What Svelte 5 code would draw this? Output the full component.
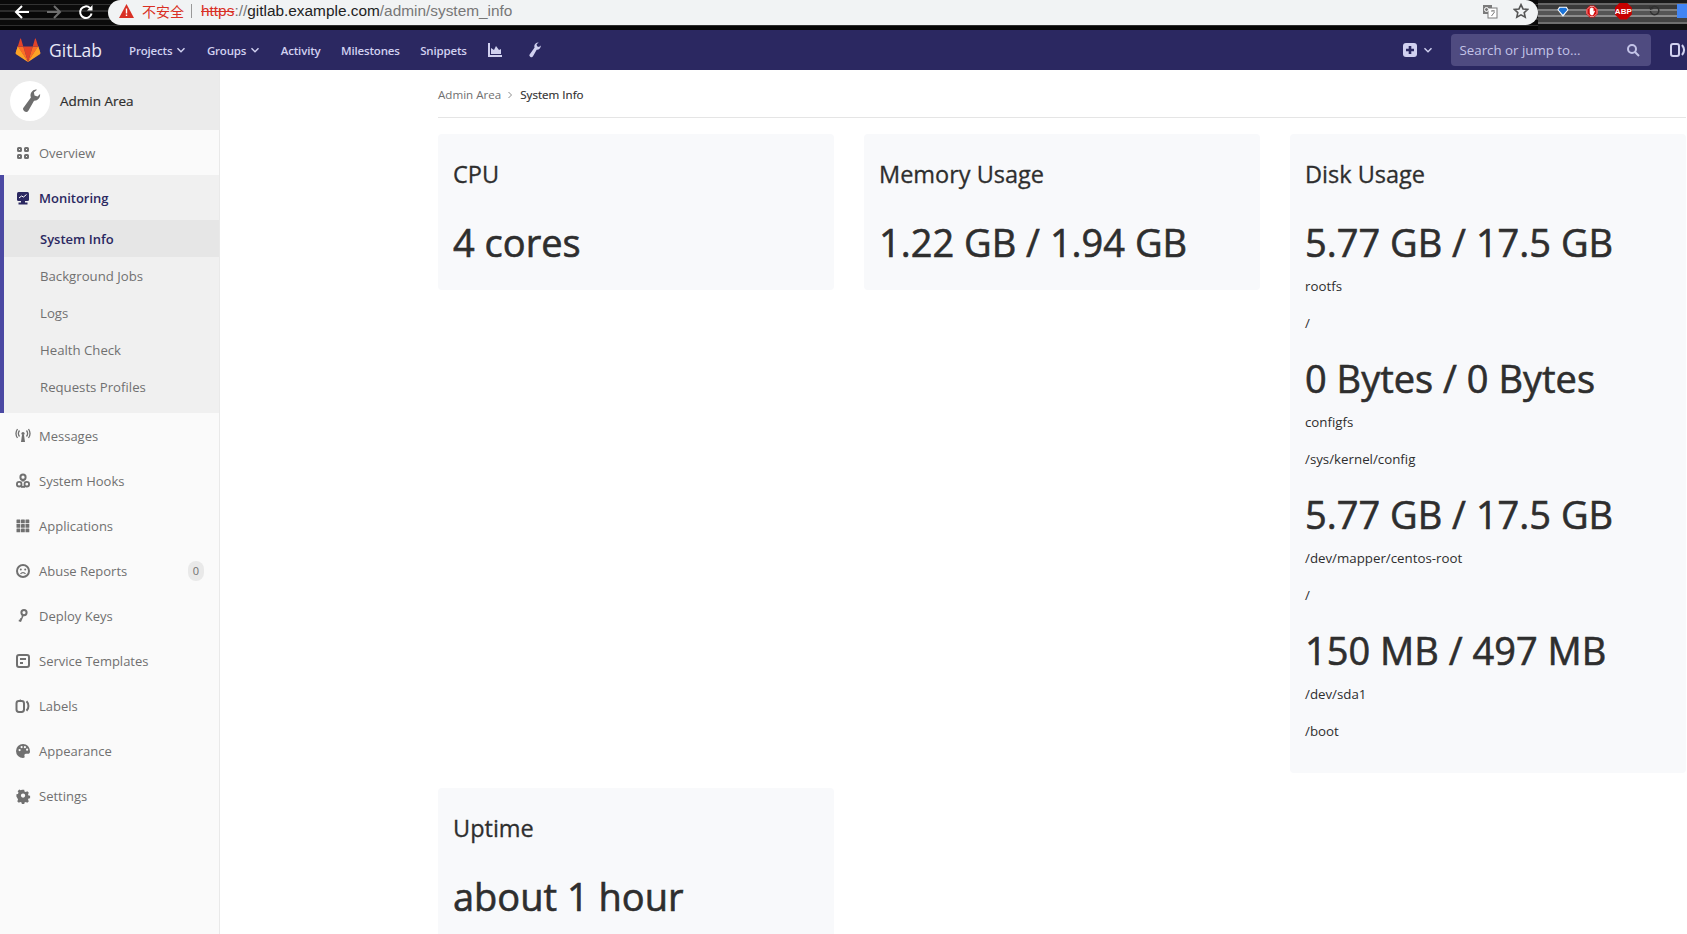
<script>
  const sub = ['System Info', 'Background Jobs', 'Logs', 'Health Check', 'Requests Profiles'];
  const disks = [
    { usage: '5.77 GB / 17.5 GB', name: 'rootfs', mount: '/' },
    { usage: '0 Bytes / 0 Bytes', name: 'configfs', mount: '/sys/kernel/config' },
    { usage: '5.77 GB / 17.5 GB', name: '/dev/mapper/centos-root', mount: '/' },
    { usage: '150 MB / 497 MB', name: '/dev/sda1', mount: '/boot' }
  ];
  const lower = [
    { label: 'Messages', icon: 'messages' },
    { label: 'System Hooks', icon: 'hook' },
    { label: 'Applications', icon: 'apps' },
    { label: 'Abuse Reports', icon: 'abuse', badge: '0' },
    { label: 'Deploy Keys', icon: 'key' },
    { label: 'Service Templates', icon: 'template' },
    { label: 'Labels', icon: 'labels' },
    { label: 'Appearance', icon: 'palette' },
    { label: 'Settings', icon: 'gear' }
  ];
</script>

{#snippet wrench(size, color)}
  <svg width={size} height={size} viewBox="0 0 16 16" fill={color}>
    <path d="M11.900.4a3.800 3.800 0 0 0-3.300 5.200L4 12a1.900 1.900 0 1 0 3 2.300l3.700-6.500a3.800 3.800 0 0 0 4-4.400L13 5l-2-.7-.4-2.100L12.700.5a3.800 3.800 0 0 0-.8-.1z"/>
  </svg>
{/snippet}

{#snippet navIcon(name)}
  <svg class="nav-icon" width="16" height="16" viewBox="0 0 16 16" fill="#707070">
    {#if name === 'messages'}
      <circle cx="8" cy="5.500" r="1.600"/>
      <path d="M7 7h2l1 7H6z"/>
      <path d="M4.500 2.500a5 5 0 0 0 0 6M11.500 2.500a5 5 0 0 1 0 6M2.500 1a8 8 0 0 0 0 9M13.500 1a8 8 0 0 1 0 9" fill="none" stroke="#707070" stroke-width="1.300"/>
    {:else if name === 'hook'}
      <circle cx="8" cy="4.200" r="2.600" fill="none" stroke="#707070" stroke-width="2"/>
      <path d="M6.500 6.500h3v2h-3z"/>
      <circle cx="4.200" cy="11.200" r="2.300" fill="none" stroke="#707070" stroke-width="1.800"/>
      <circle cx="11.800" cy="11.200" r="2.300" fill="none" stroke="#707070" stroke-width="1.800"/>
      <path d="M6 12.800h4v2H6z"/>
    {:else if name === 'apps'}
      {#each [1.500, 6, 10.500] as y}
        {#each [1.500, 6, 10.500] as x}
          <rect {x} {y} width="3.800" height="3.800" rx=".4"/>
        {/each}
      {/each}
    {:else if name === 'abuse'}
      <circle cx="8" cy="8" r="6" fill="none" stroke="#707070" stroke-width="2"/>
      <circle cx="5.800" cy="6.600" r="1"/>
      <circle cx="10.200" cy="6.600" r="1"/>
      <path d="M5.500 11a3 3 0 0 1 5 0" fill="none" stroke="#707070" stroke-width="1.200"/>
    {:else if name === 'key'}
      <circle cx="9" cy="4.600" r="2.600" fill="none" stroke="#707070" stroke-width="2"/>
      <path d="M7 6.600l1.800 1-2.800 6.400-2.400-.8.3-1.400 1.200-.3.2-1.400 1-.2z"/>
    {:else if name === 'template'}
      <rect x="2" y="2" width="12" height="12" rx="2" fill="none" stroke="#707070" stroke-width="2"/>
      <rect x="5" y="5" width="6" height="2"/>
      <rect x="5" y="9" width="3" height="2"/>
    {:else if name === 'labels'}
      <rect x="1.500" y="3" width="7.500" height="11" rx="2.400" fill="none" stroke="#707070" stroke-width="2"/>
      <path d="M3.500 2.800l1.700-1.500 1.700 1.500z"/>
      <path d="M11.500 3.200c2.600 2.600 2.600 7 0 9.600" fill="none" stroke="#707070" stroke-width="2"/>
    {:else if name === 'palette'}
      <path fill-rule="evenodd" d="M8 1a7 7 0 1 0 0 14c1.600 0 1.900-1 1.500-2-.5-1.200.2-2.200 1.500-2.200h2c1.200 0 2-.8 2-2.300C15 4 12 1 8 1zM4.600 8.200a1.100 1.100 0 1 1 0-2.200 1.100 1.100 0 0 1 0 2.200zm2-3a1.100 1.100 0 1 1 0-2.200 1.100 1.100 0 0 1 0 2.200zm3.300.1a1.100 1.100 0 1 1 0-2.200 1.100 1.100 0 0 1 0 2.200zm2.200 2.500a1.100 1.100 0 1 1 0-2.200 1.100 1.100 0 0 1 0 2.200z"/>
    {:else if name === 'gear'}
      <path fill-rule="evenodd" d="M6.600 1h2.800l.4 2 1.500.7 1.800-1 1.900 2-1 1.700.6 1.600 1.900.4v2.800l-1.900.4-.6 1.600 1 1.700-1.900 1.900-1.800-1-1.500.7-.4 1.900H6.600l-.4-1.900-1.500-.7-1.800 1-1.900-1.900 1-1.700-.6-1.600L0 9.200V6.400l1.900-.4.6-1.600-1-1.700 1.900-2 1.800 1 1.500-.7zM8 5.400a2.600 2.600 0 1 0 0 5.200 2.600 2.600 0 0 0 0-5.200z" transform="translate(1.400 .9) scale(.83)"/>
    {/if}
  </svg>
{/snippet}

{#snippet chevron(color)}
  <svg class="chev" width="10" height="10" viewBox="0 0 10 10" fill="none" stroke={color} stroke-width="1.400"><path d="M1.500 3.200L5 6.800l3.500-3.600"/></svg>
{/snippet}

<div class="page">
  <div class="chrome">
    <div class="chrome-btns">
      <svg width="16" height="16" viewBox="0 0 16 16" fill="none" stroke="#fff" stroke-width="2"><path d="M15 8H2M8 2L2 8l6 6"/></svg>
      <svg width="16" height="16" viewBox="0 0 16 16" fill="none" stroke="#6f6f6f" stroke-width="2"><path d="M1 8h13M8 2l6 6-6 6"/></svg>
      <svg width="16" height="16" viewBox="0 0 16 16" fill="none" stroke="#fff" stroke-width="2"><path d="M13.600 9.500A5.800 5.800 0 1 1 12 4"/><path d="M14.500 1v5.500H9" fill="#fff" stroke="none"/></svg>
    </div>
    <div class="omnibox">
      <svg width="15" height="14" viewBox="0 0 15 14"><path d="M7.500 0L15 14H0z" fill="#d93025"/><path d="M6.800 4.500h1.400v5H6.800zM6.800 10.500h1.400v1.600H6.800z" fill="#fff"/></svg>
      <span class="insecure">不安全</span>
      <span class="omni-sep"></span>
      <span class="url"><s>https</s><span class="dim">://</span><span class="host">gitlab.example.com</span><span class="dim">/admin/system_info</span></span>
      <span class="omni-right">
        <svg width="16" height="16" viewBox="0 0 16 16"><rect x="1" y="2" width="9" height="9" fill="#7b7b7b"/><rect x="6" y="5" width="9" height="10" fill="#fff" stroke="#7b7b7b"/><path d="M9 8h4M11 7v1M9.500 13l3-4" stroke="#7b7b7b" fill="none"/><circle cx="4.500" cy="6.500" r="2" fill="none" stroke="#fff"/></svg>
        <svg width="16" height="16" viewBox="0 0 24 24" fill="none" stroke="#555" stroke-width="2.400"><path d="M12 2.500l3 6.400 7 .8-5.200 4.700 1.500 6.900-6.300-3.600-6.300 3.600 1.500-6.900L2 9.700l7-.8z"/></svg>
      </span>
    </div>
    <div class="exts">
      <svg width="17" height="17" viewBox="0 0 16 16"><path d="M3 1.500h10l2.500 4L8 15 .5 5.500z" fill="#fff"/><path d="M4 3h8l2 2.500L8 12.500 2 5.500z" fill="#1a73d9"/></svg>
      <svg width="17" height="17" viewBox="0 0 16 16"><path d="M5 0h6l5 5v6l-5 5H5l-5-5V5z" fill="#d40c0c"/><path d="M5.500 1.200h5l4.300 4.300v5l-4.300 4.300h-5l-4.300-4.300v-5z" fill="none" stroke="#fff" stroke-width=".8"/><path d="M5 6.500V4a.7.700 0 0 1 1.200 0V3a.7.700 0 0 1 1.300 0v0a.7.700 0 0 1 1.300 0v.8a.7.700 0 0 1 1.300 0V8l1-1c.7-.4 1.200.2.900.8L9.500 13H6.500L5 10.500z" fill="#fff"/></svg>
      <span class="abp"><span>ABP</span></span>
      <svg width="16" height="16" viewBox="0 0 16 16" fill="none" stroke="#2f2f2f" stroke-width="2"><path d="M3 4a6 6 0 1 1-1 4"/><path d="M1 1.500l1 4 4-1" stroke-width="1.500"/></svg>
      <span class="ext-last"></span>
    </div>
  </div>

  <header class="navbar">
    <div class="brand">
      <svg width="26" height="24" viewBox="0 0 26 24">
        <path d="M13 24L.8 14.500 2.800 8z" fill="#fc6d26"/>
        <path d="M13 24L25.200 14.500 23.200 8z" fill="#fc6d26"/>
        <path d="M13 24L8.300 8.500h9.400z" fill="#e24329"/>
        <path d="M13 24L2.800 8.500H8.300z" fill="#fc6d26"/>
        <path d="M13 24l10.200-15.500H17.700z" fill="#fc6d26"/>
        <path d="M2.800 8.500L.6 14.800c-.2.600 0 1.200.500 1.500L13 24z" fill="#fca326"/>
        <path d="M23.200 8.500l2.200 6.300c.2.600 0 1.200-.5 1.500L13 24z" fill="#fca326"/>
        <path d="M2.800 8.500h5.500L6 .8c-.1-.4-.7-.4-.8 0z" fill="#e24329"/>
        <path d="M23.200 8.500h-5.500L20 .8c.1-.4.7-.4.8 0z" fill="#e24329"/>
      </svg>
      <span class="brand-name">GitLab</span>
    </div>
    <nav class="links">
      <span>Projects {@render chevron('#d1d1f0')}</span>
      <span>Groups {@render chevron('#d1d1f0')}</span>
      <span>Activity</span>
      <span>Milestones</span>
      <span>Snippets</span>
      <svg class="chart" width="16" height="16" viewBox="0 0 16 16" fill="#d1d1f0"><path d="M1 1h2v12h12v2H1z"/><path d="M4 12V6l3 2 2-4 3 4 2-1v5z"/></svg>
      {@render wrench(16, '#d1d1f0')}
    </nav>
    <div class="nav-right">
      <span class="plus">
        <svg width="14" height="14" viewBox="0 0 14 14"><rect width="14" height="14" rx="3" fill="#d1d1f0"/><path d="M5.700 3h2.600v2.700H11v2.600H8.300V11H5.700V8.300H3V5.700h2.700z" fill="#2b2861"/></svg>
        {@render chevron('#d1d1f0')}
      </span>
      <div class="search">
        <span>Search or jump to...</span>
        <svg width="14" height="14" viewBox="0 0 14 14" fill="none" stroke="#c4c4e8" stroke-width="2"><circle cx="6" cy="6" r="4"/><path d="M9 9l4 4"/></svg>
      </div>
      <svg class="issues" width="16" height="16" viewBox="0 0 16 16" fill="none" stroke="#d1d1f0" stroke-width="2"><rect x="1" y="2" width="8" height="12" rx="2"/><path d="M12 3c2.500 3 2.500 7 0 10"/></svg>
    </div>
  </header>

  <div class="body">
    <aside class="sidebar">
      <div class="context">
        <span class="avatar">{@render wrench(24, '#6e6e6e')}</span>
        <span class="context-name">Admin Area</span>
      </div>
      <a class="row">
        <svg class="nav-icon" width="16" height="16" viewBox="0 0 16 16" fill="none" stroke="#707070" stroke-width="2"><rect x="3" y="3" width="3" height="3" rx=".6"/><rect x="10" y="3" width="3" height="3" rx=".6"/><rect x="3" y="10" width="3" height="3" rx=".6"/><rect x="10" y="10" width="3" height="3" rx=".6"/></svg>
        Overview
      </a>
      <div class="group">
        <a class="row group-title">
          <svg class="nav-icon" width="16" height="16" viewBox="0 0 16 16" fill="#2b2861"><rect x="2" y="2" width="12" height="9" rx="1.500"/><path d="M4 8l2.500-2 2 1 3-2.500" fill="none" stroke="#fff"/><rect x="6" y="11" width="4" height="2"/><rect x="3.500" y="12.500" width="9" height="2"/></svg>
          Monitoring
        </a>
        {#each sub as item, i}
          <a class="sub" class:active={i === 0}>{item}</a>
        {/each}
      </div>
      {#each lower as item}
        <a class="row">
          {@render navIcon(item.icon)}
          {item.label}
          {#if item.badge}<span class="badge">{item.badge}</span>{/if}
        </a>
      {/each}
    </aside>

    <main class="content">
      <div class="breadcrumbs">
        <span class="crumb">Admin Area</span>
        <svg width="8" height="8" viewBox="0 0 8 8" fill="none" stroke="#8c8c8c"><path d="M2.500 1l3 3-3 3"/></svg>
        <span class="crumb current">System Info</span>
      </div>
      <div class="cards">
        <section class="card">
          <h4>CPU</h4>
          <h1>4 cores</h1>
        </section>
        <section class="card">
          <h4>Memory Usage</h4>
          <h1>1.22 GB / 1.94 GB</h1>
        </section>
        <section class="card disk">
          <h4>Disk Usage</h4>
          {#each disks as d}
            <h1>{d.usage}</h1>
            <p>{d.name}</p>
            <p>{d.mount}</p>
          {/each}
        </section>
        <section class="card">
          <h4>Uptime</h4>
          <h1>about 1 hour</h1>
        </section>
      </div>
    </main>
  </div>
</div>

<style>
  :global(body) {
    margin: 0;
    overflow: hidden;
  }

  .page {
    height: 934px;
    overflow: hidden;
    font-family: "Open Sans", "Noto Sans", sans-serif;
    color: #2e2e2e;
    background: #fff;
  }

  .chrome {
    height: 30px;
    display: flex;
    background: linear-gradient(180deg, #0a0a0a 0 4px, #333 4px 5px, #0c0c0c 5px 10px, #2c2c2c 10px 12px, #080808 12px 18px, #3a3a3a 18px 20px, #0b0b0b 20px 25px, #2e2e2e 25px 26px, #050505 26px 30px);
  }

  .chrome-btns {
    width: 108px;
    height: 24px;
    flex: none;
    display: flex;
    align-items: center;
    gap: 16px;
    padding-left: 14px;
    box-sizing: border-box;
  }

  .omnibox {
    width: 1430px;
    height: 25px;
    flex: none;
    background: #f1f3f4;
    border-radius: 13px;
    display: flex;
    align-items: center;
    padding: 0 9px 3px 11px;
    box-sizing: border-box;
    font-family: "Liberation Sans", sans-serif;
    font-size: 15.400px;
  }

  .insecure {
    color: #d93025;
    margin-left: 8px;
    font-family: "Noto Sans CJK SC", sans-serif;
    font-size: 14px;
  }

  .omni-sep {
    width: 1px;
    height: 14px;
    background: #999;
    margin: 0 9px 0 7px;
  }

  .url s {
    color: #d93025;
  }

  .dim {
    color: #777;
  }

  .host {
    color: #222;
  }

  .omni-right {
    margin-left: auto;
    display: flex;
    gap: 15px;
  }

  .exts {
    flex: 1;
    height: 30px;
    display: flex;
    align-items: center;
    gap: 17px;
    padding: 0 0 8px 19px;
    box-sizing: border-box;
    overflow: hidden;
    background: linear-gradient(180deg, #1a1a1a 0 3px, #666 3px 5px, #3a3a3a 5px 9px, #808080 9px 11px, #555 11px 15px, #8c8c8c 15px 17px, #444 17px 22px, #707070 22px 24px, #111 24px 30px);
  }

  .abp {
    width: 17px;
    height: 17px;
    flex: none;
    background: #c70000;
    clip-path: polygon(30% 0, 70% 0, 100% 30%, 100% 70%, 70% 100%, 30% 100%, 0 70%, 0 30%);
    color: #fff;
    font: 700 8px "Liberation Sans", sans-serif;
    display: flex;
    align-items: center;
    justify-content: center;
  }

  .ext-last {
    width: 10px;
    height: 14px;
    background: #4285f4;
    flex: none;
  }

  .navbar {
    height: 40px;
    background: #2b2861;
    display: flex;
    align-items: center;
    padding-left: 15px;
    font-size: 11.500px;
    letter-spacing: -.17px;
    font-weight: 600;
    color: #d1d1f0;
    box-sizing: border-box;
  }

  .brand {
    display: flex;
    align-items: center;
    gap: 8px;
    width: 114px;
    flex: none;
    letter-spacing: 0;
  }

  .brand-name {
    font-size: 17.500px;
    font-weight: 400;
    color: #e8e8f7;
  }

  .links {
    display: flex;
    align-items: center;
    gap: 20.500px;
  }

  .links span {
    display: flex;
    align-items: center;
    gap: 4px;
  }

  .chart {
    margin-right: 2px;
  }

  .nav-right {
    margin-left: auto;
    display: flex;
    align-items: center;
    letter-spacing: 0;
  }

  .plus {
    display: flex;
    align-items: center;
    gap: 6px;
    margin-right: 18px;
  }

  .search {
    width: 200px;
    height: 32px;
    background: #4f4b80;
    border-radius: 4px;
    display: flex;
    align-items: center;
    justify-content: space-between;
    padding: 0 11px 0 9px;
    box-sizing: border-box;
    font-size: 13.300px;
    font-weight: 400;
    color: #c4c4e8;
  }

  .issues {
    margin-left: 19px;
    margin-right: 1.500px;
    flex: none;
  }

  .body {
    display: flex;
  }

  .sidebar {
    width: 220px;
    flex: none;
    height: 864px;
    background: #fafafa;
    border-right: 1px solid #e9e9e9;
    box-sizing: border-box;
    font-size: 13px;
    color: #707070;
  }

  .context {
    height: 60px;
    background: #ebebeb;
    display: flex;
    align-items: center;
    padding: 2px 0 0 10px;
    box-sizing: border-box;
    gap: 10px;
    font-size: 13.500px;
    color: #2e2e2e;
  }

  .context-name {
    -webkit-text-stroke: .2px #2e2e2e;
  }

  .avatar {
    width: 40px;
    height: 40px;
    background: #fff;
    border-radius: 50%;
    display: flex;
    align-items: center;
    justify-content: center;
  }

  .row {
    height: 45px;
    display: flex;
    align-items: center;
    padding-left: 15px;
    padding-right: 15px;
    gap: 8px;
  }

  .nav-icon {
    flex: none;
  }

  .group {
    background: #f0f0f0;
    border-left: 4px solid #4b49a3;
    padding-bottom: 8px;
  }

  .group-title {
    padding-left: 11px;
    font-weight: 600;
    color: #2b2861;
  }

  .sub {
    display: flex;
    align-items: center;
    height: 37px;
    padding-left: 36px;
    font-size: 13.200px;
  }

  .sub.active {
    background: #e6e6e6;
    color: #2b2861;
    font-weight: 600;
    font-size: 13px;
  }

  .badge {
    margin-left: auto;
    width: 16px;
    height: 20px;
    border-radius: 10px;
    background: #e9e9e9;
    display: flex;
    align-items: center;
    justify-content: center;
    font-size: 11px;
  }

  .content {
    flex: 1;
    padding-left: 218px;
    padding-right: 1px;
    min-width: 0;
  }

  .breadcrumbs {
    height: 48px;
    padding-top: 2px;
    border-bottom: 1px solid #e5e5e5;
    box-sizing: border-box;
    display: flex;
    align-items: center;
    gap: 5px;
    font-size: 11.600px;
    color: #707070;
    margin-bottom: 16px;
  }

  .crumb.current {
    color: #2e2e2e;
    -webkit-text-stroke: .15px #2e2e2e;
    margin-left: 1px;
  }

  .cards {
    display: grid;
    grid-template-columns: repeat(3, 396px);
    gap: 15.500px 30px;
    align-items: start;
  }

  .card {
    background: #f8f9fb;
    border-radius: 4px;
    padding: 15px;
  }

  h4 {
    margin: 12px 0 0;
    font-size: 23.500px;
    font-weight: 400;
    -webkit-text-stroke: .3px #2e2e2e;
    line-height: 26px;
    color: #2e2e2e;
  }

  h1 {
    margin: 33px 0 9px;
    font-size: 38px;
    font-weight: 400;
    -webkit-text-stroke: .6px #2e2e2e;
    line-height: 1.2;
    color: #2e2e2e;
  }

  .card.disk h1 {
    margin-bottom: 10px;
  }

  /* collapses with the 16px below the p */
  .card.disk p + h1 {
    margin-top: 22.400px;
  }

  p {
    margin: 0 0 16px;
    font-size: 13.300px;
    line-height: 21px;
  }
</style>
